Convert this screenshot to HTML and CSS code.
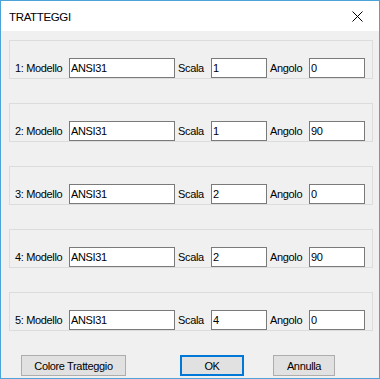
FILE: index.html
```html
<!DOCTYPE html>
<html lang="it">
<head>
    <meta charset="UTF-8">
    <meta name="viewport" content="width=device-width, initial-scale=1.0">
    <title>Tratteggi</title>
    <link rel="stylesheet" href="styles.css">
</head>
<body>
    <div class="window">
        <div class="titlebar">
            <span class="title">TRATTEGGI</span>
            <svg class="close" width="11" height="11" viewBox="0 0 11 11">
                <path d="M0.5 0.5 L10.5 10.5 M10.5 0.5 L0.5 10.5" stroke="#000" stroke-width="1" fill="none"/>
            </svg>
        </div>
        <div class="content">
            <div class="group">
                <span class="lbl lbl-modello">1: Modello</span>
                <input class="field field-modello" type="text" value="ANSI31">
                <span class="lbl lbl-scala">Scala</span>
                <input class="field field-small" type="text" value="1">
                <span class="lbl lbl-angolo">Angolo</span>
                <input class="field field-small" type="text" value="0">
            </div>
            <div class="group">
                <span class="lbl lbl-modello">2: Modello</span>
                <input class="field field-modello" type="text" value="ANSI31">
                <span class="lbl lbl-scala">Scala</span>
                <input class="field field-small" type="text" value="1">
                <span class="lbl lbl-angolo">Angolo</span>
                <input class="field field-small" type="text" value="90">
            </div>
            <div class="group">
                <span class="lbl lbl-modello">3: Modello</span>
                <input class="field field-modello" type="text" value="ANSI31">
                <span class="lbl lbl-scala">Scala</span>
                <input class="field field-small" type="text" value="2">
                <span class="lbl lbl-angolo">Angolo</span>
                <input class="field field-small" type="text" value="0">
            </div>
            <div class="group">
                <span class="lbl lbl-modello">4: Modello</span>
                <input class="field field-modello" type="text" value="ANSI31">
                <span class="lbl lbl-scala">Scala</span>
                <input class="field field-small" type="text" value="2">
                <span class="lbl lbl-angolo">Angolo</span>
                <input class="field field-small" type="text" value="90">
            </div>
            <div class="group">
                <span class="lbl lbl-modello">5: Modello</span>
                <input class="field field-modello" type="text" value="ANSI31">
                <span class="lbl lbl-scala">Scala</span>
                <input class="field field-small" type="text" value="4">
                <span class="lbl lbl-angolo">Angolo</span>
                <input class="field field-small" type="text" value="0">
            </div>
            <div class="footer">
                <button class="btn btn-colore">Colore Tratteggio</button>
                <button class="btn btn-ok">OK</button>
                <button class="btn btn-annulla">Annulla</button>
            </div>
        </div>
    </div>
</body>
</html>
```

FILE: styles.css
```css
* {
    box-sizing: border-box;
}

body {
    margin: 0;
    font-family: 'Liberation Sans', Arial, sans-serif;
    font-size: 11px;
    letter-spacing: -0.35px;
    color: #000;
    background-color: #f0f0f0;
}

.window {
    width: 380px;
    height: 379px;
    border: 1px solid #4ca3d8;
    background-color: #f0f0f0;
    display: flex;
    flex-direction: column;
}

.titlebar {
    height: 30px;
    background-color: #fff;
    display: flex;
    align-items: center;
    justify-content: space-between;
    padding: 0 16px 0 8px;
}

.title {
    font-size: 11.5px;
    padding-top: 1px;
}

.close {
    display: block;
}

.content {
    padding: 9px 6px 0 8px;
}

.group {
    height: 39px;
    border: 1px solid #dcdcdc;
    display: flex;
    align-items: flex-end;
    padding: 0 0 0 5px;
    margin-bottom: 24px;
}

.group:last-of-type {
    margin-bottom: 0;
}

.lbl {
    height: 20px;
    line-height: 20px;
    white-space: nowrap;
}

.lbl-modello {
    width: 54px;
}

.lbl-scala {
    width: 33px;
    margin-left: 3px;
}

.lbl-angolo {
    width: 39px;
    margin-left: 3px;
}

.field {
    height: 20px;
    border: 1px solid #7a7a7a;
    background-color: #fff;
    font-family: inherit;
    font-size: 11px;
    letter-spacing: -0.35px;
    color: #000;
    padding: 0 1px;
    margin: 0;
    outline: none;
}

.field-modello {
    width: 106px;
}

.field-small {
    width: 56px;
}

.footer {
    display: flex;
    margin-top: 20px;
    padding-left: 12px;
}

.btn {
    height: 21px;
    font-family: inherit;
    font-size: 11px;
    letter-spacing: -0.35px;
    color: #000;
    background-color: #e1e1e1;
    border: 1px solid #adadad;
    padding: 0;
    margin: 0;
}

.btn-colore {
    width: 105px;
}

.btn-ok {
    width: 64px;
    margin-left: 54px;
    border: 2px solid #0078d7;
}

.btn-annulla {
    width: 62px;
    margin-left: 29px;
}
```
